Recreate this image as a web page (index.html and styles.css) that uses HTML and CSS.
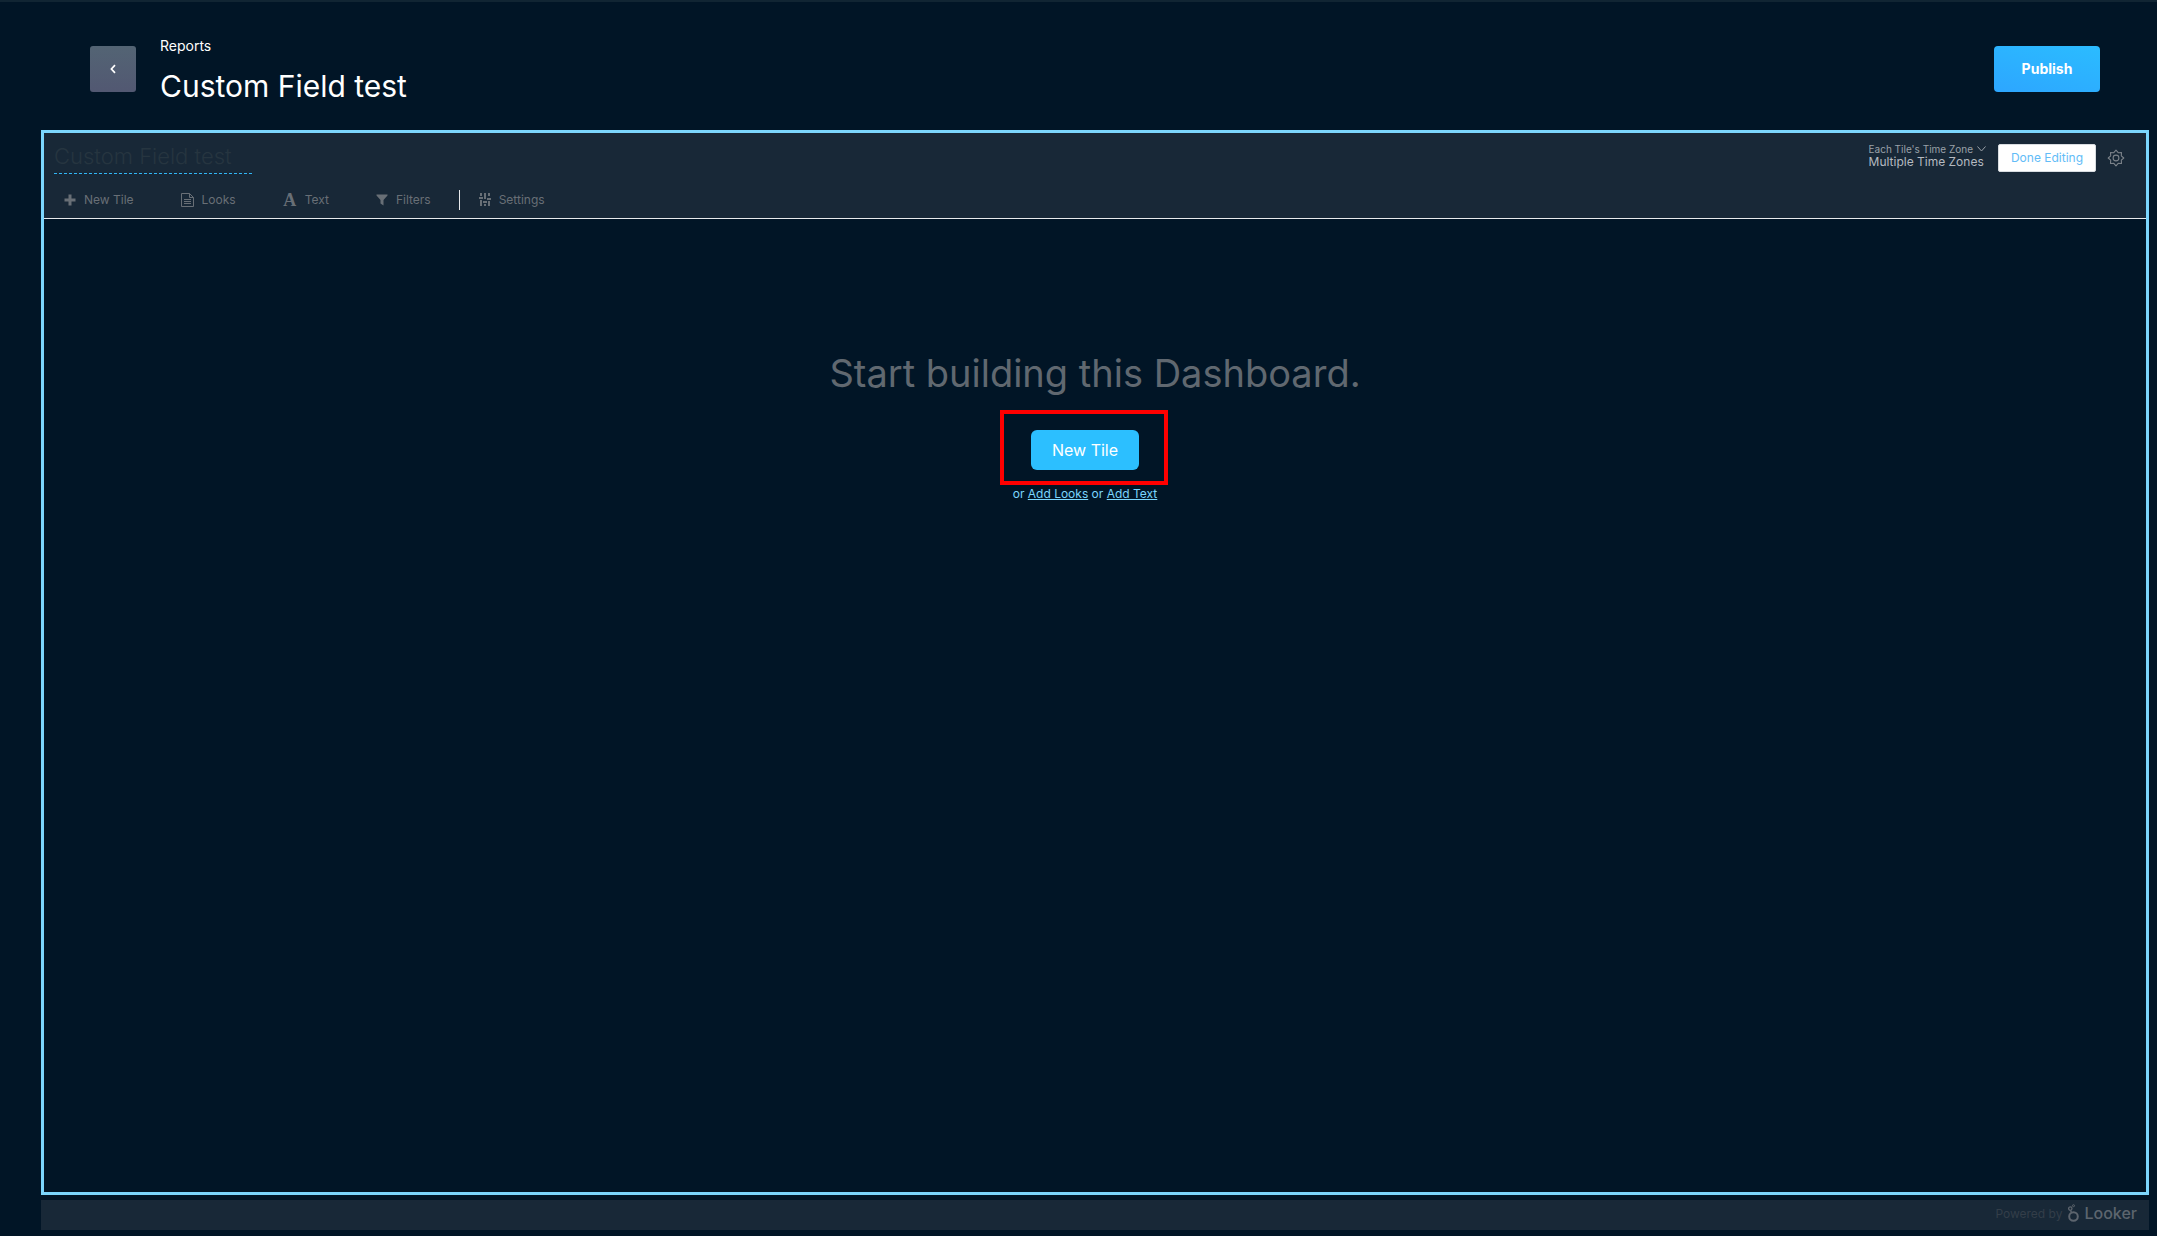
FILE: index.html
```html
<!DOCTYPE html>
<html lang="en">
<head>
<meta charset="utf-8">
<title>Custom Field test</title>
<link rel="stylesheet" href="styles.css">
</head>
<body>
<header class="page-header">
  <button class="back" type="button" aria-label="Back">
    <svg width="6" height="10" viewBox="0 0 6 10"><path d="M5 1.2 1.4 5 5 8.8" fill="none" stroke="#fff" stroke-width="1.7"/></svg>
  </button>
  <div class="titles">
    <div class="crumb">Reports</div>
    <h1 class="title">Custom Field test</h1>
  </div>
  <button class="publish" type="button">Publish</button>
</header>
<main class="frame">
  <section class="toolbar">
    <div class="toolbar-top">
      <input class="name-input" type="text" aria-label="Dashboard name" value="Custom Field test">
      <div class="top-actions">
        <button class="timezone" type="button">
          <span class="tz-label">Each Tile's Time Zone
            <svg width="9" height="6" viewBox="0 0 9 6"><path d="M.5.5 4.5 5 8.500.5" fill="none" stroke="currentColor"/></svg>
          </span>
          <span class="tz-value">Multiple Time Zones</span>
        </button>
        <button class="done" type="button">Done Editing</button>
        <button class="gear" type="button" aria-label="Dashboard actions">
          <svg width="18" height="18" viewBox="0 0 18 18" fill="none" stroke="currentColor" stroke-width="1.1"><circle cx="9" cy="9" r="2.900"/><path d="M9 1.200 11.200 3.700 14.500 3.500 14.300 6.800 16.800 9 14.300 11.200 14.500 14.500 11.200 14.300 9 16.800 6.800 14.300 3.500 14.500 3.700 11.200 1.200 9 3.700 6.800 3.500 3.500 6.800 3.700z" stroke-linejoin="round"/></svg>
        </button>
      </div>
    </div>
    <nav class="tools">
      <button class="tool" type="button"><svg width="12" height="12" viewBox="0 0 12 12"><path d="M4.500.5h3v4h4v3h-4v4h-3v-4h-4v-3h4z" fill="currentColor"/></svg>New Tile</button>
      <button class="tool" type="button"><svg width="13" height="14" viewBox="0 0 13 14" fill="none" stroke="currentColor"><path d="M.5.5h8l4 4v9H.5zM8.500.5v4h4M3 6.500h7M3 8.500h7M3 10.500h7"/></svg>Looks</button>
      <button class="tool" type="button"><span class="glyph" aria-hidden="true">A</span>Text</button>
      <button class="tool" type="button"><svg width="12" height="12" viewBox="0 0 12 12"><path d="M.5.5h11v1L7.500 6v5.500l-3-2V6l-4-4.500z" fill="currentColor"/></svg>Filters</button>
      <span class="divider"></span>
      <button class="tool" type="button"><svg width="12" height="13" viewBox="0 0 12 13" fill="none" stroke="currentColor" stroke-width="2"><path d="M2 0v3M2 7v6M6 0v6M6 11v2M10 0v3M10 8v5M0 5h4M4 9h4M8 6h4"/></svg>Settings</button>
    </nav>
  </section>
  <section class="empty">
    <h2 class="empty-title">Start building this Dashboard.</h2>
    <div class="highlight"><button class="new-tile" type="button">New Tile</button></div>
    <p class="alternatives">or <a href="#looks">Add Looks</a> or <a href="#text">Add Text</a></p>
  </section>
</main>
<footer class="footer">
  <span class="powered">Powered by</span>
  <svg class="mark" width="11" height="18" viewBox="0 0 11 18" fill="none" stroke="currentColor"><circle cx="5.500" cy="12.500" r="4.300" stroke-width="2"/><path d="M3.600 8.500 2.500 6.500" stroke-width="1.500"/><circle cx="2.300" cy="4.600" r="1.700" stroke-width="1.300"/><circle cx="5.500" cy="1.700" r="1" stroke-width="1"/></svg>
  <span class="brand">Looker</span>
</footer>
</body>
</html>
```

FILE: styles.css
```css
* { box-sizing: border-box; }
body {
  margin: 0;
  min-height: 100vh;
  display: flex;
  flex-direction: column;
  padding-bottom: 6px;
  background: #011526;
  border-top: 2px solid #112533;
  color: #fff;
  font-family: Inter, "Liberation Sans", sans-serif;
}
button { font: inherit; color: inherit; background: none; border: 0; padding: 0; }
svg { display: block; flex: none; }
.page-header { display: flex; height: 128px; padding: 32px 57px 0 90px; }
.back {
  display: grid;
  place-items: center;
  width: 46px;
  height: 46px;
  margin-top: 12px;
  border-radius: 3px;
  background: linear-gradient(#536474, #525872);
}
.titles { flex: 1; padding-left: 24px; }
.crumb { font-size: 14px; line-height: 24px; }
.title { margin: 8px 0 0; font-size: 30px; line-height: 40px; font-weight: 400; }
.publish {
  width: 106px;
  height: 46px;
  margin-top: 12px;
  padding-bottom: 1px;
  border-radius: 4px;
  background: linear-gradient(195deg, #2bbcff, #2da6ff);
  font-size: 14px;
  font-weight: 700;
}
.frame {
  flex: 1;
  display: flex;
  flex-direction: column;
  margin: 0 8px 5px 41px;
  border: 3px solid #7bd6fd;
}
.toolbar { background: #182837; border-bottom: 1px solid #e8eaec; color: #686f76; }
.toolbar-top { display: flex; justify-content: space-between; height: 50px; padding: 9px 21px 0 10px; }
.name-input {
  width: 198px;
  height: 32px;
  padding: 0 0 4px;
  border: 0;
  border-bottom: 1px dashed #30b5f5;
  background: none;
  color: #263540;
  font: 300 22px/28px Inter, "Liberation Sans", sans-serif;
}
.top-actions { display: flex; align-items: flex-start; }
.timezone { display: flex; flex-direction: column; margin-right: 12px; text-align: left; color: #b5bac0; }
.tz-label { display: flex; align-items: center; gap: 4px; font-size: 10px; line-height: 14px; color: #9aa1a8; }
.tz-value { font-size: 12px; line-height: 12px; }
.done {
  width: 98px;
  height: 28px;
  margin: 2px 11px 0 0;
  padding-bottom: 1px;
  background: #fff;
  border: 1px solid #d8dce0;
  border-radius: 2px;
  color: #62bcf7;
  font-size: 12px;
}
.gear { margin-top: 7px; color: #7b8289; }
.tools { display: flex; align-items: center; height: 35px; padding: 0 20px 2px; font-size: 12px; }
.tool { display: flex; align-items: center; gap: 8px; margin-right: 47px; }
.glyph { width: 14px; font: 700 18px/14px "Liberation Serif", serif; }
.divider { width: 1px; height: 20px; margin: 0 19px 0 -19px; background: #e8eaec; }
.empty { display: flex; flex-direction: column; align-items: center; padding-top: 126px; }
.empty-title { margin: 0; font-size: 38px; line-height: 56px; font-weight: 400; color: #606870; }
.highlight { margin: 9px 22px 0 0; padding: 16px 25px 11px 27px; border: 4px solid #f00; }
.new-tile {
  display: block;
  width: 108px;
  height: 40px;
  border-radius: 6px;
  background: #2cbfff;
  font-size: 16px;
}
.alternatives { margin: 0 20px 0 0; font-size: 12px; line-height: 18px; color: #7bd6fd; }
.alternatives a { color: inherit; }
.footer {
  display: flex;
  align-items: center;
  justify-content: flex-end;
  height: 30px;
  margin: 0 8px 0 41px;
  padding: 0 12px 4px 0;
  background: #182837;
  color: #5d656e;
}
.powered { margin-right: 6px; font-size: 12px; color: #333e49; }
.mark { margin-right: 5px; }
.brand { font-size: 16px; line-height: 24px; font-weight: 500; }
```
